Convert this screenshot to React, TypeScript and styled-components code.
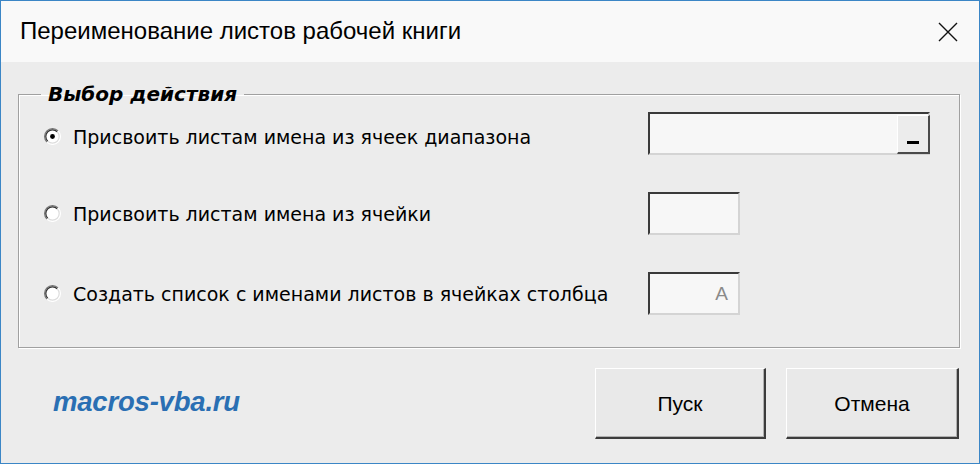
import React, { useState } from 'react'
import styled, { createGlobalStyle } from 'styled-components'

const GlobalStyle = createGlobalStyle`
  html, body {
    margin: 0;
    padding: 0;
    background: #ececec;
  }
  * {
    box-sizing: border-box;
  }
`

const Window = styled.div`
  width: 980px;
  height: 464px;
  display: flex;
  flex-direction: column;
  background: #ececec;
  border: 1px solid #3b86c6;
  font-family: 'DejaVu Sans', 'Liberation Sans', sans-serif;
  color: #000;
`

const TitleBar = styled.div`
  height: 61px;
  flex: none;
  display: flex;
  align-items: center;
  justify-content: space-between;
  padding: 0 20px 0 19px;
  background: #f9f9f9;
`

const Title = styled.div`
  font-family: 'Liberation Sans', sans-serif;
  font-size: 24px;
  padding-bottom: 2px;
`

const CloseButton = styled.button`
  width: 22px;
  height: 22px;
  padding: 0;
  border: none;
  background: transparent;
  display: flex;
  align-items: center;
  justify-content: center;
`

const Body = styled.div`
  flex: 1;
  display: flex;
  flex-direction: column;
  padding: 20px 19px 0 17px;
`

const GroupBox = styled.fieldset`
  margin: 0;
  height: 266px;
  padding: 6px 20px 0 22px;
  border: 1px solid #a0a0a0;
  box-shadow: inset 1px 1px 0 #fff, 1px 1px 0 #fff;
`

const Legend = styled.legend`
  padding: 0 7px;
  font-family: 'DejaVu Sans', sans-serif;
  font-size: 20px;
  font-weight: bold;
  font-style: italic;
  line-height: 24px;
`

const Rows = styled.div`
  display: grid;
  grid-template-columns: 607px 1fr;
  row-gap: 37px;
`

const OptionLabel = styled.label<{ $shift: number }>`
  display: flex;
  align-items: center;
  gap: 12px;
  height: 43px;
  padding-left: 3px;
  padding-top: ${(p) => p.$shift}px;
  font-size: 19px;
  cursor: default;
`

const RadioMark = styled.span`
  width: 17px;
  height: 17px;
  display: block;
  flex: none;
  margin-top: -3px;
`

const Field = styled.div<{ $width: number }>`
  width: ${(p) => p.$width}px;
  height: 43px;
  display: flex;
  align-items: center;
  justify-content: flex-end;
  background: #f7f7f7;
  border-top: 2px solid #3a3a3a;
  border-left: 2px solid #3a3a3a;
  border-right: 2px solid #d4d4d4;
  border-bottom: 2px solid #d4d4d4;
`

const FieldValue = styled.span`
  font-family: 'Liberation Sans', sans-serif;
  font-size: 19px;
  color: #8a8a8a;
  padding-right: 10px;
`

const PickButton = styled.div`
  width: 33px;
  height: 39px;
  margin-right: -2px;
  margin-top: 2px;
  display: flex;
  align-items: flex-end;
  justify-content: center;
  padding-bottom: 8px;
  background: #ececec;
  border-top: 1px solid #fff;
  border-left: 1px solid #fff;
  border-right: 2px solid #4a4a4a;
  border-bottom: 2px solid #4a4a4a;
`

const Dash = styled.span`
  width: 12px;
  height: 3px;
  background: #000;
`

const Footer = styled.div`
  flex: 1;
  display: flex;
  align-items: flex-start;
  justify-content: space-between;
  padding: 20px 1px 0 35px;
`

const SiteLink = styled.a`
  margin-top: 18px;
  font-family: 'Liberation Sans', sans-serif;
  font-size: 27.5px;
  font-weight: bold;
  font-style: italic;
  letter-spacing: -0.2px;
  color: #2a6fb3;
  text-decoration: none;
`

const Buttons = styled.div`
  display: flex;
  gap: 20px;
`

const DialogButton = styled.button<{ $width: number }>`
  width: ${(p) => p.$width}px;
  height: 71px;
  padding: 0;
  padding-top: 2px;
  background: #e9e9e9;
  border-top: 1px solid #fff;
  border-left: 1px solid #fff;
  border-right: 2px solid #3c3c3c;
  border-bottom: 2px solid #3c3c3c;
  box-shadow: inset -1px -1px 0 #b0b0b0;
  font-family: 'Liberation Sans', sans-serif;
  font-size: 21px;
  color: #000;
`

const Radio = ({ checked }: { checked: boolean }) => (
  <RadioMark>
    <svg width="17" height="17" viewBox="0 0 14 14">
      <circle cx="7" cy="7" r="6.5" fill="#fff" />
      <path d="M2.4 11.6 A6.5 6.5 0 0 1 11.6 2.4" fill="none" stroke="#777" strokeWidth="1" />
      <path d="M3.1 10.9 A5.5 5.5 0 0 1 10.9 3.1" fill="none" stroke="#333" strokeWidth="1" />
      <path d="M11.6 2.4 A6.5 6.5 0 0 1 2.4 11.6" fill="none" stroke="#fff" strokeWidth="1" />
      <path d="M10.9 3.1 A5.5 5.5 0 0 1 3.1 10.9" fill="none" stroke="#ddd" strokeWidth="1" />
      {checked && <circle cx="7" cy="7" r="2" fill="#000" />}
    </svg>
  </RadioMark>
)

const options = [
  { text: 'Присвоить листам имена из ячеек диапазона', shift: 6 },
  { text: 'Присвоить листам имена из ячейки', shift: 0 },
  { text: 'Создать список с именами листов в ячейках столбца', shift: 0 },
]

export default function App() {
  const [selected, setSelected] = useState(0)

  const label = (i: number) => (
    <OptionLabel $shift={options[i].shift} onClick={() => setSelected(i)}>
      <Radio checked={selected === i} />
      {options[i].text}
    </OptionLabel>
  )

  return (
    <>
      <GlobalStyle />
      <Window>
        <TitleBar>
          <Title>Переименование листов рабочей книги</Title>
          <CloseButton>
            <svg width="20" height="20" viewBox="0 0 20 20">
              <path d="M1 1 L19 19 M19 1 L1 19" stroke="#111" strokeWidth="1.4" />
            </svg>
          </CloseButton>
        </TitleBar>
        <Body>
          <GroupBox>
            <Legend>Выбор действия</Legend>
            <Rows>
              {label(0)}
              <Field $width={282}>
                <PickButton>
                  <Dash />
                </PickButton>
              </Field>

              {label(1)}
              <Field $width={92} />

              {label(2)}
              <Field $width={92}>
                <FieldValue>A</FieldValue>
              </Field>
            </Rows>
          </GroupBox>
          <Footer>
            <SiteLink href="#">macros-vba.ru</SiteLink>
            <Buttons>
              <DialogButton $width={171}>Пуск</DialogButton>
              <DialogButton $width={173}>Отмена</DialogButton>
            </Buttons>
          </Footer>
        </Body>
      </Window>
    </>
  )
}
